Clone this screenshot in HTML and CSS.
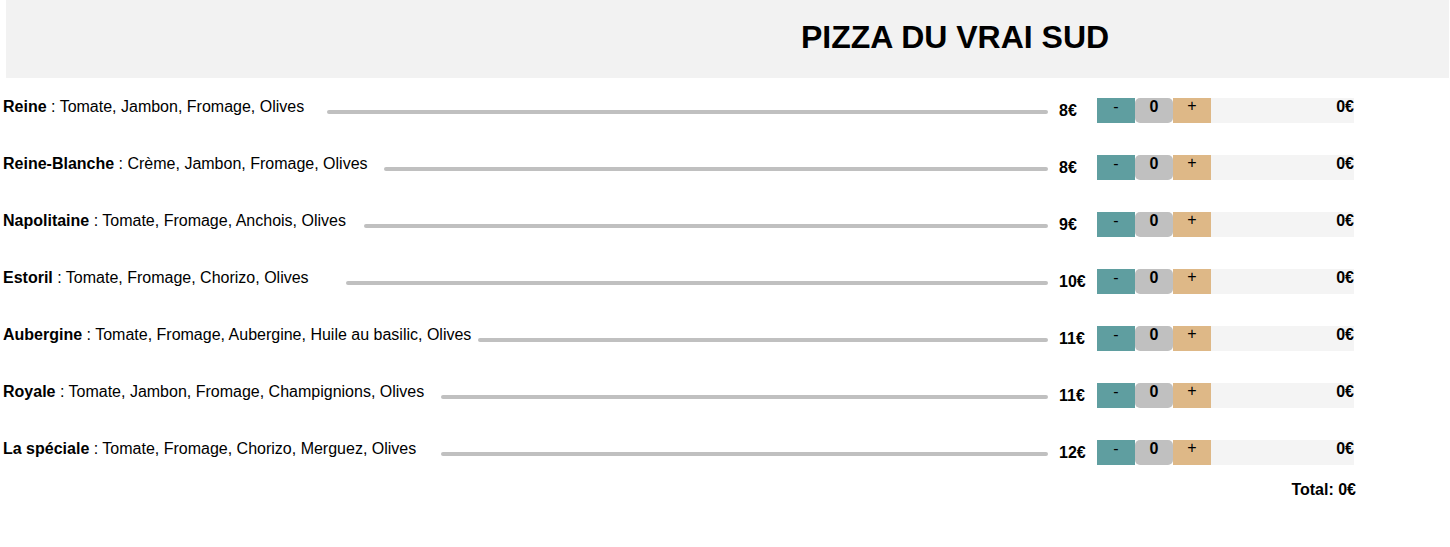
FILE: index.html
```html
<!DOCTYPE html>
<html lang="fr">
<head>
<meta charset="utf-8">
<title>Pizza du vrai sud</title>
<link rel="stylesheet" href="styles.css">
</head>
<body>
<header class="header">
  <h1 class="title">PIZZA DU VRAI SUD</h1>
</header>
<main class="menu">
  <div class="row">
    <div class="desc"><b>Reine</b> : Tomate, Jambon, Fromage, Olives</div>
    <div class="line gap-23"></div>
    <div class="price">8€</div>
    <div class="controls"><button class="btn minus">-</button><span class="qty">0</span><button class="btn plus">+</button><span class="sum">0€</span></div>
  </div>
  <div class="row">
    <div class="desc"><b>Reine-Blanche</b> : Crème, Jambon, Fromage, Olives</div>
    <div class="line gap-16"></div>
    <div class="price">8€</div>
    <div class="controls"><button class="btn minus">-</button><span class="qty">0</span><button class="btn plus">+</button><span class="sum">0€</span></div>
  </div>
  <div class="row">
    <div class="desc"><b>Napolitaine</b> : Tomate, Fromage, Anchois, Olives</div>
    <div class="line gap-18"></div>
    <div class="price">9€</div>
    <div class="controls"><button class="btn minus">-</button><span class="qty">0</span><button class="btn plus">+</button><span class="sum">0€</span></div>
  </div>
  <div class="row">
    <div class="desc"><b>Estoril</b> : Tomate, Fromage, Chorizo, Olives</div>
    <div class="line gap-37"></div>
    <div class="price">10€</div>
    <div class="controls"><button class="btn minus">-</button><span class="qty">0</span><button class="btn plus">+</button><span class="sum">0€</span></div>
  </div>
  <div class="row">
    <div class="desc"><b>Aubergine</b> : Tomate, Fromage, Aubergine, Huile au basilic, Olives</div>
    <div class="line gap-7"></div>
    <div class="price">11€</div>
    <div class="controls"><button class="btn minus">-</button><span class="qty">0</span><button class="btn plus">+</button><span class="sum">0€</span></div>
  </div>
  <div class="row">
    <div class="desc"><b>Royale</b> : Tomate, Jambon, Fromage, Champignions, Olives</div>
    <div class="line gap-17"></div>
    <div class="price">11€</div>
    <div class="controls"><button class="btn minus">-</button><span class="qty">0</span><button class="btn plus">+</button><span class="sum">0€</span></div>
  </div>
  <div class="row">
    <div class="desc"><b>La spéciale</b> : Tomate, Fromage, Chorizo, Merguez, Olives</div>
    <div class="line gap-25"></div>
    <div class="price">12€</div>
    <div class="controls"><button class="btn minus">-</button><span class="qty">0</span><button class="btn plus">+</button><span class="sum">0€</span></div>
  </div>
  <div class="total">Total: 0€</div>
</main>
</body>
</html>
```
FILE: styles.css
```css
html, body {
  margin: 0;
  padding: 0;
  background: #ffffff;
  font-family: "Liberation Sans", Arial, sans-serif;
  color: #000;
}

.header {
  margin: 0 1px 0 6px;
  height: 78px;
  background: #f2f2f2;
  box-sizing: border-box;
  padding: 19px 0 0 795px;
}

.title {
  margin: 0;
  font-size: 32px;
  line-height: 37px;
  font-weight: bold;
}

.menu {
  width: 1351px;
  padding: 18px 0 0 3px;
  display: flex;
  flex-direction: column;
  gap: 30px;
}

.row {
  display: flex;
  align-items: flex-start;
  font-size: 16px;
  line-height: 18px;
}

.desc {
  white-space: nowrap;
  padding-top: 2px;
}

.line {
  flex: 1;
  height: 4px;
  border-radius: 2px;
  background: #c0c0c0;
  margin: 14px 10px 0 20px;
}

.gap-7 { margin-left: 7px; }
.gap-16 { margin-left: 16px; }
.gap-17 { margin-left: 17px; }
.gap-18 { margin-left: 18px; }
.gap-23 { margin-left: 23px; }
.gap-25 { margin-left: 25px; }
.gap-37 { margin-left: 37px; }

.price {
  width: 38px;
  padding-left: 1px;
  font-weight: bold;
  margin-top: 6px;
}

.controls {
  display: flex;
  margin-top: 2px;
  height: 25px;
}

.btn {
  width: 38px;
  height: 25px;
  border: none;
  margin: 0;
  padding: 0;
  font-family: "Liberation Sans", Arial, sans-serif;
  font-size: 16px;
  line-height: 15px;
  color: #000;
  display: flex;
  justify-content: center;
  align-items: flex-start;
}

.minus {
  background: #5f9ea0;
  padding-top: 1px;
}

.plus {
  background: #deb887;
}

.qty {
  width: 38px;
  height: 25px;
  background: #c0c0c0;
  border-radius: 5px;
  text-align: center;
  font-weight: bold;
  font-size: 16px;
  line-height: 18px;
}

.sum {
  width: 143px;
  height: 25px;
  background: #f4f4f4;
  text-align: right;
  font-weight: bold;
  font-size: 16px;
  line-height: 18px;
}

.total {
  margin: -14px -2px 0 0;
  text-align: right;
  font-weight: bold;
  font-size: 16px;
  line-height: 18px;
}
```
